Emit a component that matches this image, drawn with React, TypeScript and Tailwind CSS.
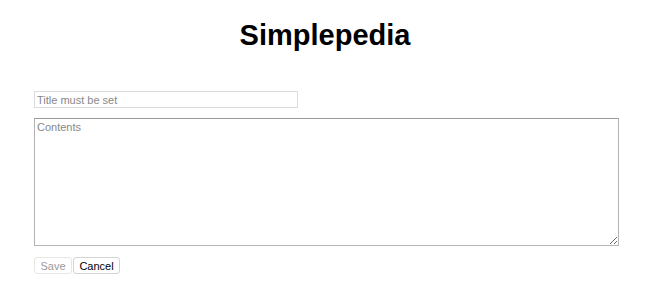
import React from 'react';

export default function App() {
    return (
        <div className="min-h-[299px] bg-white font-['Liberation_Sans',Arial,sans-serif] text-black">
            <h1 className="pt-[18px] text-center text-[29px] font-bold leading-[35px]">
                Simplepedia
            </h1>

            <div className="mx-[34px] mt-[38px] flex flex-col">
                <input
                    type="text"
                    placeholder="Title must be set"
                    className="h-[17px] w-[264px] border border-[#dcdcdc] px-[2px] text-[11px] outline-none placeholder:text-[#888]"
                />
                <textarea
                    placeholder="Contents"
                    className="mt-[10px] h-[128px] w-[585px] resize border border-[#b4b4b4] border-t-[#9a9a9a] px-[2px] py-[1px] text-[11px] leading-[14px] outline-none placeholder:text-[#888]"
                />
                <div className="mt-[11px] flex gap-[1px]">
                    <button
                        type="button"
                        disabled
                        className="h-[17px] w-[38px] rounded-[3px] border border-[#e6e6e6] bg-white text-[11px] leading-[14px] text-[#9a9a9a]"
                    >
                        Save
                    </button>
                    <button
                        type="button"
                        className="h-[17px] w-[47px] rounded-[3px] border border-[#d4d4d4] bg-white text-[11px] leading-[14px] text-black"
                    >
                        Cancel
                    </button>
                </div>
            </div>
        </div>
    );
}
